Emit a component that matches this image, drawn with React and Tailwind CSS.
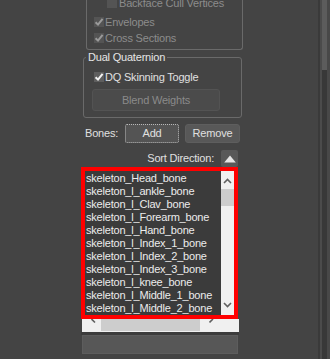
const bones = [
  "skeleton_Head_bone",
  "skeleton_l_ankle_bone",
  "skeleton_l_Clav_bone",
  "skeleton_l_Forearm_bone",
  "skeleton_l_Hand_bone",
  "skeleton_l_Index_1_bone",
  "skeleton_l_Index_2_bone",
  "skeleton_l_Index_3_bone",
  "skeleton_l_knee_bone",
  "skeleton_l_Middle_1_bone",
  "skeleton_l_Middle_2_bone",
];

const Check = ({ checked, disabled }) => (
  <span
    className={`w-[10px] h-[10px] shrink-0 flex items-center justify-center ${
      disabled ? "bg-[#545454]" : "bg-[#5e5e5e]"
    }`}
  >
    {checked && (
      <svg width="10" height="10" viewBox="0 0 10 10">
        <path
          d="M1.6 5.2 L4 7.6 L8.6 1.8"
          fill="none"
          stroke={disabled ? "#9a9a9a" : "#f2f2f2"}
          strokeWidth="2"
        />
      </svg>
    )}
  </span>
);

const Chevron = ({ up }) => (
  <svg width="9" height="6" viewBox="0 0 9 6">
    <path
      d={up ? "M1 5 L4.5 1.5 L8 5" : "M1 1 L4.5 4.5 L8 1"}
      fill="none"
      stroke="#606060"
      strokeWidth="1.6"
    />
  </svg>
);

const PanelScrollbar = () => (
  <div className="w-[12px] flex shrink-0">
    <div className="w-[2px] bg-[#3a3a3a]" />
    <div className="w-[2px] bg-[#4b4b4b]" />
    <div className="w-[5px] flex flex-col">
      <div className="h-[70px] bg-[#5c5c5c]" />
      <div className="flex-1 bg-[#383838]" />
    </div>
    <div className="w-[3px] bg-[#484848]" />
  </div>
);

export default function App() {
  return (
    <div className="w-[330px] h-[359px] overflow-hidden bg-[#444444] flex font-['Liberation_Sans',Arial,sans-serif] text-[11px] tracking-[-0.2px] text-[#e0e0e0]">
      <div className="flex-1 flex flex-col">
        {/* Display group (scrolled, top cut off) */}
        <div className="ml-[86px] w-[157px] h-[50px] shrink-0 border-x border-b border-[#6a6a6a] rounded-b-[3px] text-[#8c8c8c]">
          <div className="-mt-[5px] flex flex-col">
            <div className="h-[16px] flex items-center pl-[20px]">
              <Check disabled />
              <span className="ml-[2px]">Backface Cull Vertices</span>
            </div>
            <div className="mt-[3px] h-[16px] flex items-center pl-[7px]">
              <Check checked disabled />
              <span className="ml-[1px]">Envelopes</span>
            </div>
            <div className="h-[16px] flex items-center pl-[7px]">
              <Check checked disabled />
              <span className="ml-[1px]">Cross Sections</span>
            </div>
          </div>
        </div>

        {/* Dual Quaternion group */}
        <fieldset className="mt-[1px] ml-[83px] w-[159px] shrink-0 border border-[#6a6a6a] rounded-[3px]">
          <legend className="ml-[2px] px-[2px] leading-[13px] text-[#e6e6e6]">
            Dual Quaternion
          </legend>
          <div className="flex flex-col">
            <div className="mt-[6px] h-[14px] flex items-center pl-[10px]">
              <Check checked />
              <span className="ml-[1px]">DQ Skinning Toggle</span>
            </div>
            <div className="mt-[5px] mb-[6px] ml-[8px] w-[128px] h-[22px] rounded-[3px] bg-[#4b4b4b] border border-[#535353] flex items-center justify-center text-[#8a8a8a]">
              Blend Weights
            </div>
          </div>
        </fieldset>

        {/* Bones row */}
        <div className="mt-[6px] ml-[85px] h-[19px] flex items-center shrink-0">
          <span className="w-[40px]">Bones:</span>
          <div className="w-[54px] h-full rounded-[2px] bg-[#545454] border border-dotted border-[#b8b8b8] flex items-center justify-center">
            Add
          </div>
          <div className="ml-[6px] w-[55px] h-full rounded-[3px] bg-[#585858] border border-[#5e5e5e] flex items-center justify-center">
            Remove
          </div>
        </div>

        {/* Sort direction */}
        <div className="mt-[7px] ml-[82px] w-[156px] h-[17px] flex items-center justify-end shrink-0">
          <span className="mr-[7px]">Sort Direction:</span>
          <div className="w-[17px] h-full rounded-[2px] bg-[#585858] flex items-center justify-center">
            <svg width="12" height="8" viewBox="0 0 12 8">
              <path d="M6 0.5 L11.8 7.5 L0.2 7.5 Z" fill="#e4e4e4" />
            </svg>
          </div>
        </div>

        {/* Bone list */}
        <div className="ml-[81px] w-[158px] flex flex-col shrink-0">
          <div className="w-[157px] h-[152px] border-4 border-[#ff0000] flex">
            <div className="w-[136px] bg-[#3b3b3b] overflow-hidden pt-[1px] pl-[1px] leading-[13px] text-[#ececec] whitespace-nowrap">
              {bones.map((b) => (
                <div key={b}>{b}</div>
              ))}
            </div>
            <div className="flex-1 bg-[#f0f0f0] flex flex-col items-center">
              <div className="mt-[7px] h-[6px] flex">
                <Chevron up />
              </div>
              <div className="mt-[5px] w-full h-[17px] bg-[#cdcdcd]" />
              <div className="flex-1" />
              <div className="mb-[7px] h-[6px] flex">
                <Chevron />
              </div>
            </div>
          </div>
          <div className="ml-[1px] w-[157px] h-[13px] bg-[#f0f0f0] flex items-start">
            <svg className="ml-[9px] w-[5px] h-[5px]" viewBox="0 0 5 5">
              <path d="M0.5 0 L4 3.5" stroke="#606060" strokeWidth="1.6" />
            </svg>
            <div className="ml-[5px] w-[99px] h-[12px] bg-[#cdcdcd]" />
            <svg className="ml-[9px] w-[5px] h-[5px]" viewBox="0 0 5 5">
              <path d="M0.5 3.5 L4 0" stroke="#606060" strokeWidth="1.6" />
            </svg>
          </div>
          <div className="h-[3px] bg-[#3c3c3c]" />
        </div>

        <div className="ml-[82px] w-[156px] h-[19px] shrink-0 bg-[#575757] border border-[#5d5d5d]" />
      </div>
      <PanelScrollbar />
    </div>
  );
}
